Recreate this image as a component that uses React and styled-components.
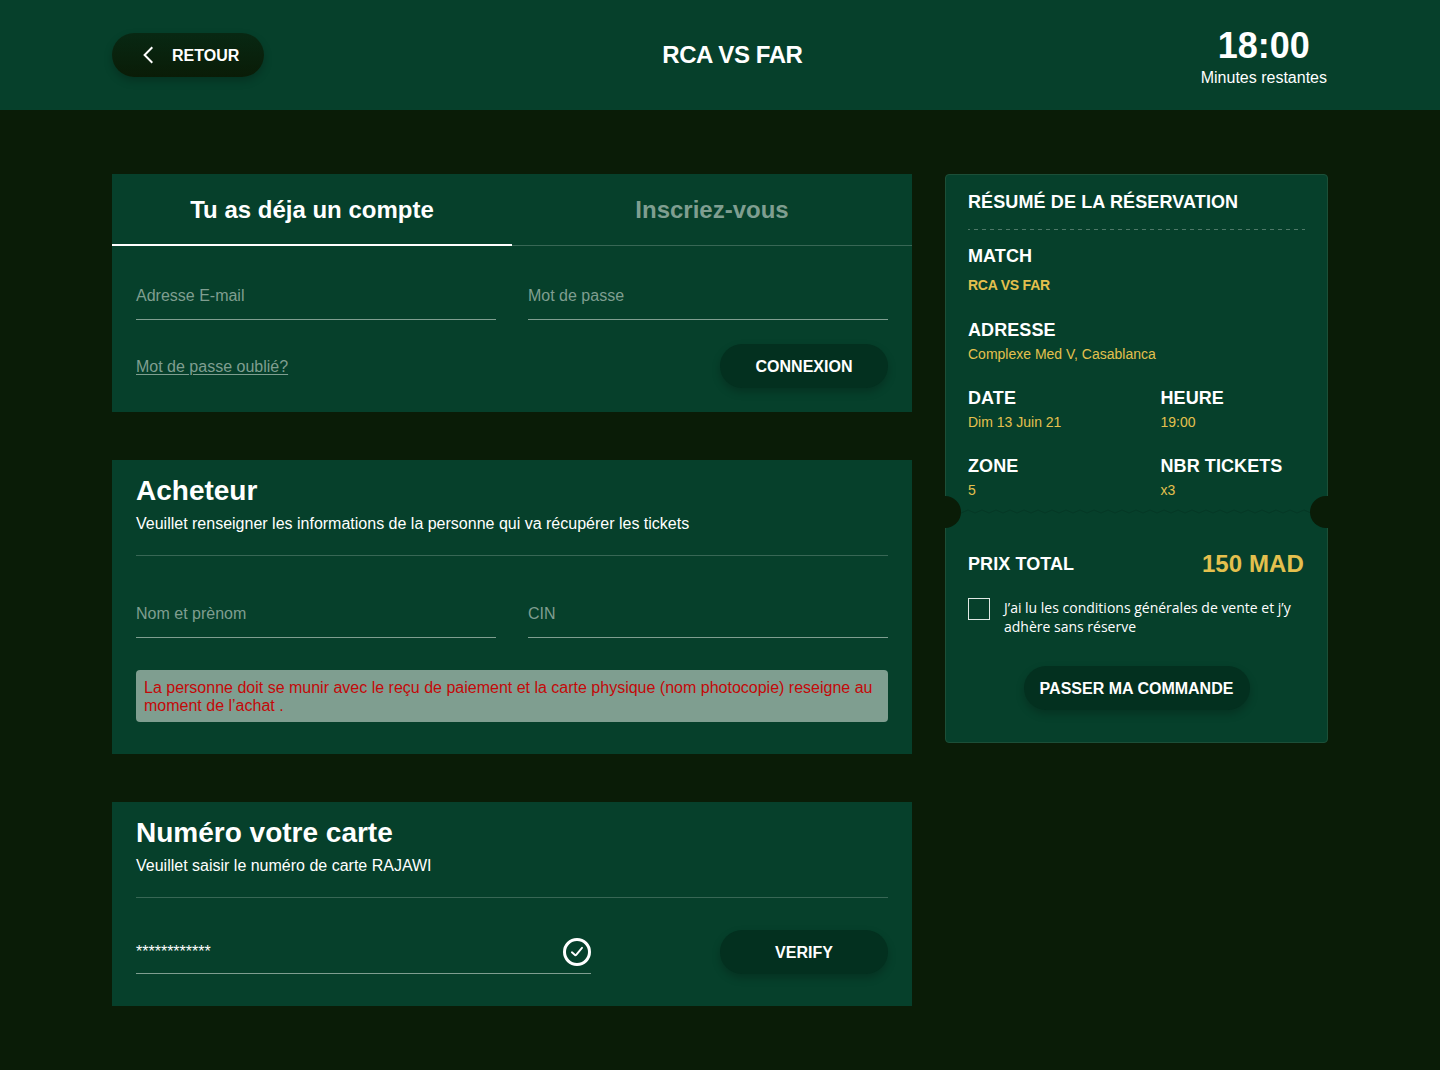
import React from "react";
import styled, { createGlobalStyle } from "styled-components";

const color = {
  page: "#0a1c07",
  panel: "#06402b",
  button: "#03301f",
  muted: "#7f9e90",
  divider: "#386755",
  gold: "#e4c04e",
  red: "#c30909",
};

const GlobalStyle = createGlobalStyle`
  * { box-sizing: border-box; }
  body {
    margin: 0;
    background: ${color.page};
    color: #fff;
    font-family: "Liberation Sans", Arial, Helvetica, sans-serif;
    font-size: 16px;
  }
  h1, h2, p { margin: 0; }
`;

const Page = styled.div`
  width: 1440px;
  min-height: 1070px;
`;

const Header = styled.header`
  height: 110px;
  padding: 0 113px 0 112px;
  display: flex;
  align-items: center;
  justify-content: space-between;
  background: ${color.panel};
`;

const Button = styled.button`
  width: ${(p) => p.$width || 168}px;
  height: 44px;
  padding: 2px 0 0;
  border: 0;
  border-radius: 22px;
  display: flex;
  align-items: center;
  justify-content: center;
  background: ${color.button};
  box-shadow: 0 4px 8px rgba(0, 0, 0, 0.22);
  color: #fff;
  font: bold 16px/20px "Liberation Sans", Arial, sans-serif;
`;

const BackButton = styled(Button)`
  justify-content: flex-start;
  gap: 19px;
  padding-left: 31px;
  background: linear-gradient(#082813, #0a1c07);

  svg { margin-top: -2px; }
`;

const MatchTitle = styled.h1`
  font-size: 24px;
  line-height: 28px;
  letter-spacing: -0.42px;
`;

const Timer = styled.div`
  display: flex;
  flex-direction: column;
  align-items: center;
  gap: 2px;
  padding-top: 4px;
`;

const TimerValue = styled.strong`
  font-size: 36px;
  line-height: 40px;
`;

const TimerLabel = styled.span`
  font-size: 16px;
  line-height: 20px;
`;

const Main = styled.main`
  display: grid;
  grid-template-columns: 800px 383px;
  column-gap: 33px;
  align-items: start;
  padding: 64px 112px;
`;

const Stack = styled.div`
  display: flex;
  flex-direction: column;
  gap: 48px;
`;

const Panel = styled.section`
  height: ${(p) => p.$height}px;
  padding: ${(p) => (p.$flush ? "0" : "16px 24px 0")};
  background: ${color.panel};
`;

const Tabs = styled.div`
  height: 72px;
  display: grid;
  grid-template-columns: 1fr 1fr;
`;

const Tab = styled.div`
  display: flex;
  justify-content: center;
  padding-top: 22px;
  border-bottom: ${(p) => (p.$active ? "2px solid #fff" : `1px solid ${color.divider}`)};
  color: ${(p) => (p.$active ? "#fff" : color.muted)};
  font-size: 24px;
  font-weight: bold;
  line-height: 28px;
`;

const LoginBody = styled.div`
  padding: 24px 24px 0;
`;

const FieldRow = styled.div`
  display: grid;
  grid-template-columns: 1fr 1fr;
  gap: 32px;
`;

const Field = styled.div`
  height: 50px;
  display: flex;
  align-items: center;
  justify-content: space-between;
  width: ${(p) => (p.$width ? `${p.$width}px` : "auto")};
  padding-top: ${(p) => (p.$filled ? 6 : 3)}px;
  border-bottom: 1px solid ${color.muted};
  color: ${(p) => (p.$filled ? "#fff" : color.muted)};
  line-height: 20px;
`;

const ActionRow = styled.div`
  display: flex;
  align-items: ${(p) => p.$align || "center"};
  justify-content: space-between;
  margin-top: ${(p) => p.$top}px;
`;

const ForgotLink = styled.a`
  padding-top: 2px;
  color: ${color.muted};
  line-height: 20px;
  text-decoration: underline;
  text-decoration-thickness: 1px;
  text-underline-offset: 2px;
`;

const PanelTitle = styled.h2`
  font-size: 28px;
  line-height: 30px;
`;

const PanelText = styled.p`
  margin-top: 8px;
  line-height: 20px;
`;

const Divider = styled.div`
  height: 1px;
  margin: 21px 0 ${(p) => p.$bottom}px;
  background: ${color.divider};
`;

const Notice = styled.p`
  margin-top: 32px;
  padding: 9px 8px 7px;
  border-radius: 4px;
  background: ${color.muted};
  color: ${color.red};
  line-height: 18px;
`;

const TicketFrame = styled.div`
  position: relative;
`;

const Ticket = styled.aside`
  height: 569px;
  padding: 16px 22px 0;
  border: 1px solid #1c4f38;
  border-radius: 4px;
  background: ${color.panel};
`;

const Notch = styled.i`
  position: absolute;
  top: 322px;
  ${(p) => p.$side}: 0;
  width: ${(p) => (p.$side === "left" ? 16 : 18)}px;
  height: 32px;
  border-radius: ${(p) => (p.$side === "left" ? "0 16px 16px 0" : "16px 0 0 16px")};
  background: ${color.page};
`;

const Tear = styled.svg`
  position: absolute;
  left: 16px;
  top: 334px;
`;

const TicketTitle = styled.h2`
  font-size: 18px;
  line-height: 22px;
  letter-spacing: 0.12px;
`;

const DashedLine = styled.div`
  height: 1px;
  margin: 16px 0 15px;
  background: repeating-linear-gradient(90deg, ${color.muted} 0 2px, transparent 2px 6px, ${color.muted} 6px 8px);
  opacity: 0.6;
`;

const DetailGrid = styled.div`
  display: grid;
  grid-template-columns: 192.5px 1fr;
  row-gap: 24px;
`;

const Detail = styled.div`
  display: flex;
  flex-direction: column;
  gap: ${(p) => p.$gap || 4}px;
  padding-bottom: ${(p) => p.$after || 0}px;
  grid-column: ${(p) => (p.$wide ? "1 / -1" : "auto")};
`;

const DetailLabel = styled.strong`
  font-size: 18px;
  line-height: 22px;
  letter-spacing: 0.08px;
`;

const DetailValue = styled.span`
  color: ${color.gold};
  font-size: 14px;
  line-height: 18px;
  font-weight: ${(p) => (p.$bold ? "bold" : "normal")};
  letter-spacing: ${(p) => (p.$bold ? -0.24 : 0)}px;
`;

const TotalRow = styled.div`
  display: flex;
  align-items: center;
  justify-content: space-between;
  height: 28px;
  margin-top: 51px;
`;

const Total = styled.strong`
  padding-right: 1px;
  color: ${color.gold};
  font-size: 24px;
  line-height: 28px;
  letter-spacing: 0.1px;
`;

const Terms = styled.label`
  display: grid;
  grid-template-columns: 22px 1fr;
  column-gap: 14px;
  margin-top: 20px;
  font: 14px/19px "Open Sans", sans-serif;
`;

const Checkbox = styled.span`
  width: 22px;
  height: 22px;
  border: 1px solid #dfe8e4;
`;

const Centered = styled.div`
  display: flex;
  justify-content: center;
  margin-top: 30px;
`;

const tearPoints = Array.from(
  { length: 51 },
  (_, i) => `${i * 7},${i % 2 ? 2 : 5}`
).join(" ");

const CheckIcon = () => (
  <svg width="28" height="28" viewBox="0 0 28 28" fill="none" stroke="#fff">
    <circle cx="14" cy="14" r="12.5" strokeWidth="3" />
    <path d="M8.9 14.3L12 17Q12.6 17.5 13.2 16.9L19 9.8" strokeWidth="1.9" strokeLinecap="round" strokeLinejoin="round" />
  </svg>
);

export default function App() {
  return (
    <>
      <GlobalStyle />
      <Page>
        <Header>
          <BackButton $width={152}>
            <svg width="10" height="18" viewBox="0 0 10 18" fill="none" stroke="#fff" strokeWidth="2">
              <path d="M9.3 1.3L1.6 9L9.3 16.7" />
            </svg>
            RETOUR
          </BackButton>
          <MatchTitle>RCA VS FAR</MatchTitle>
          <Timer>
            <TimerValue>18:00</TimerValue>
            <TimerLabel>Minutes restantes</TimerLabel>
          </Timer>
        </Header>
        <Main>
          <Stack>
            <Panel $height={238} $flush>
              <Tabs>
                <Tab $active>Tu as déja un compte</Tab>
                <Tab>Inscriez-vous</Tab>
              </Tabs>
              <LoginBody>
                <FieldRow>
                  <Field>Adresse E-mail</Field>
                  <Field>Mot de passe</Field>
                </FieldRow>
                <ActionRow $top={24}>
                  <ForgotLink>Mot de passe oublié?</ForgotLink>
                  <Button>CONNEXION</Button>
                </ActionRow>
              </LoginBody>
            </Panel>
            <Panel $height={294}>
              <PanelTitle>Acheteur</PanelTitle>
              <PanelText>Veuillet renseigner les informations de la personne qui va récupérer les tickets</PanelText>
              <Divider $bottom={32} />
              <FieldRow>
                <Field>Nom et prènom</Field>
                <Field>CIN</Field>
              </FieldRow>
              <Notice>
                La personne doit se munir avec le reçu de paiement et la carte physique (nom photocopie) reseigne au
                moment de l’achat .
              </Notice>
            </Panel>
            <Panel $height={204}>
              <PanelTitle>Numéro votre carte</PanelTitle>
              <PanelText>Veuillet saisir le numéro de carte RAJAWI</PanelText>
              <Divider $bottom={26} />
              <ActionRow $top={0} $align="flex-end">
                <Field $width={455} $filled>
                  ************
                  <CheckIcon />
                </Field>
                <Button>VERIFY</Button>
              </ActionRow>
            </Panel>
          </Stack>
          <TicketFrame>
            <Ticket>
              <TicketTitle>RÉSUMÉ DE LA RÉSERVATION</TicketTitle>
              <DashedLine />
              <DetailGrid>
                <Detail $wide $gap={9} $after={1}>
                  <DetailLabel>MATCH</DetailLabel>
                  <DetailValue $bold>RCA VS FAR</DetailValue>
                </Detail>
                <Detail $wide>
                  <DetailLabel>ADRESSE</DetailLabel>
                  <DetailValue>Complexe Med V, Casablanca</DetailValue>
                </Detail>
                <Detail>
                  <DetailLabel>DATE</DetailLabel>
                  <DetailValue>Dim 13 Juin 21</DetailValue>
                </Detail>
                <Detail>
                  <DetailLabel>HEURE</DetailLabel>
                  <DetailValue>19:00</DetailValue>
                </Detail>
                <Detail>
                  <DetailLabel>ZONE</DetailLabel>
                  <DetailValue>5</DetailValue>
                </Detail>
                <Detail>
                  <DetailLabel>NBR TICKETS</DetailLabel>
                  <DetailValue>x3</DetailValue>
                </Detail>
              </DetailGrid>
              <TotalRow>
                <DetailLabel>PRIX TOTAL</DetailLabel>
                <Total>150 MAD</Total>
              </TotalRow>
              <Terms>
                <Checkbox />
                <span>J’ai lu les conditions générales de vente et j’y adhère sans réserve</span>
              </Terms>
              <Centered>
                <Button $width={226}>PASSER MA COMMANDE</Button>
              </Centered>
            </Ticket>
            <Tear width="350" height="7" viewBox="0 0 350 7" fill="none" stroke={color.button} strokeOpacity="0.5">
              <polyline points={tearPoints} />
            </Tear>
            <Notch $side="left" />
            <Notch $side="right" />
          </TicketFrame>
        </Main>
      </Page>
    </>
  );
}
